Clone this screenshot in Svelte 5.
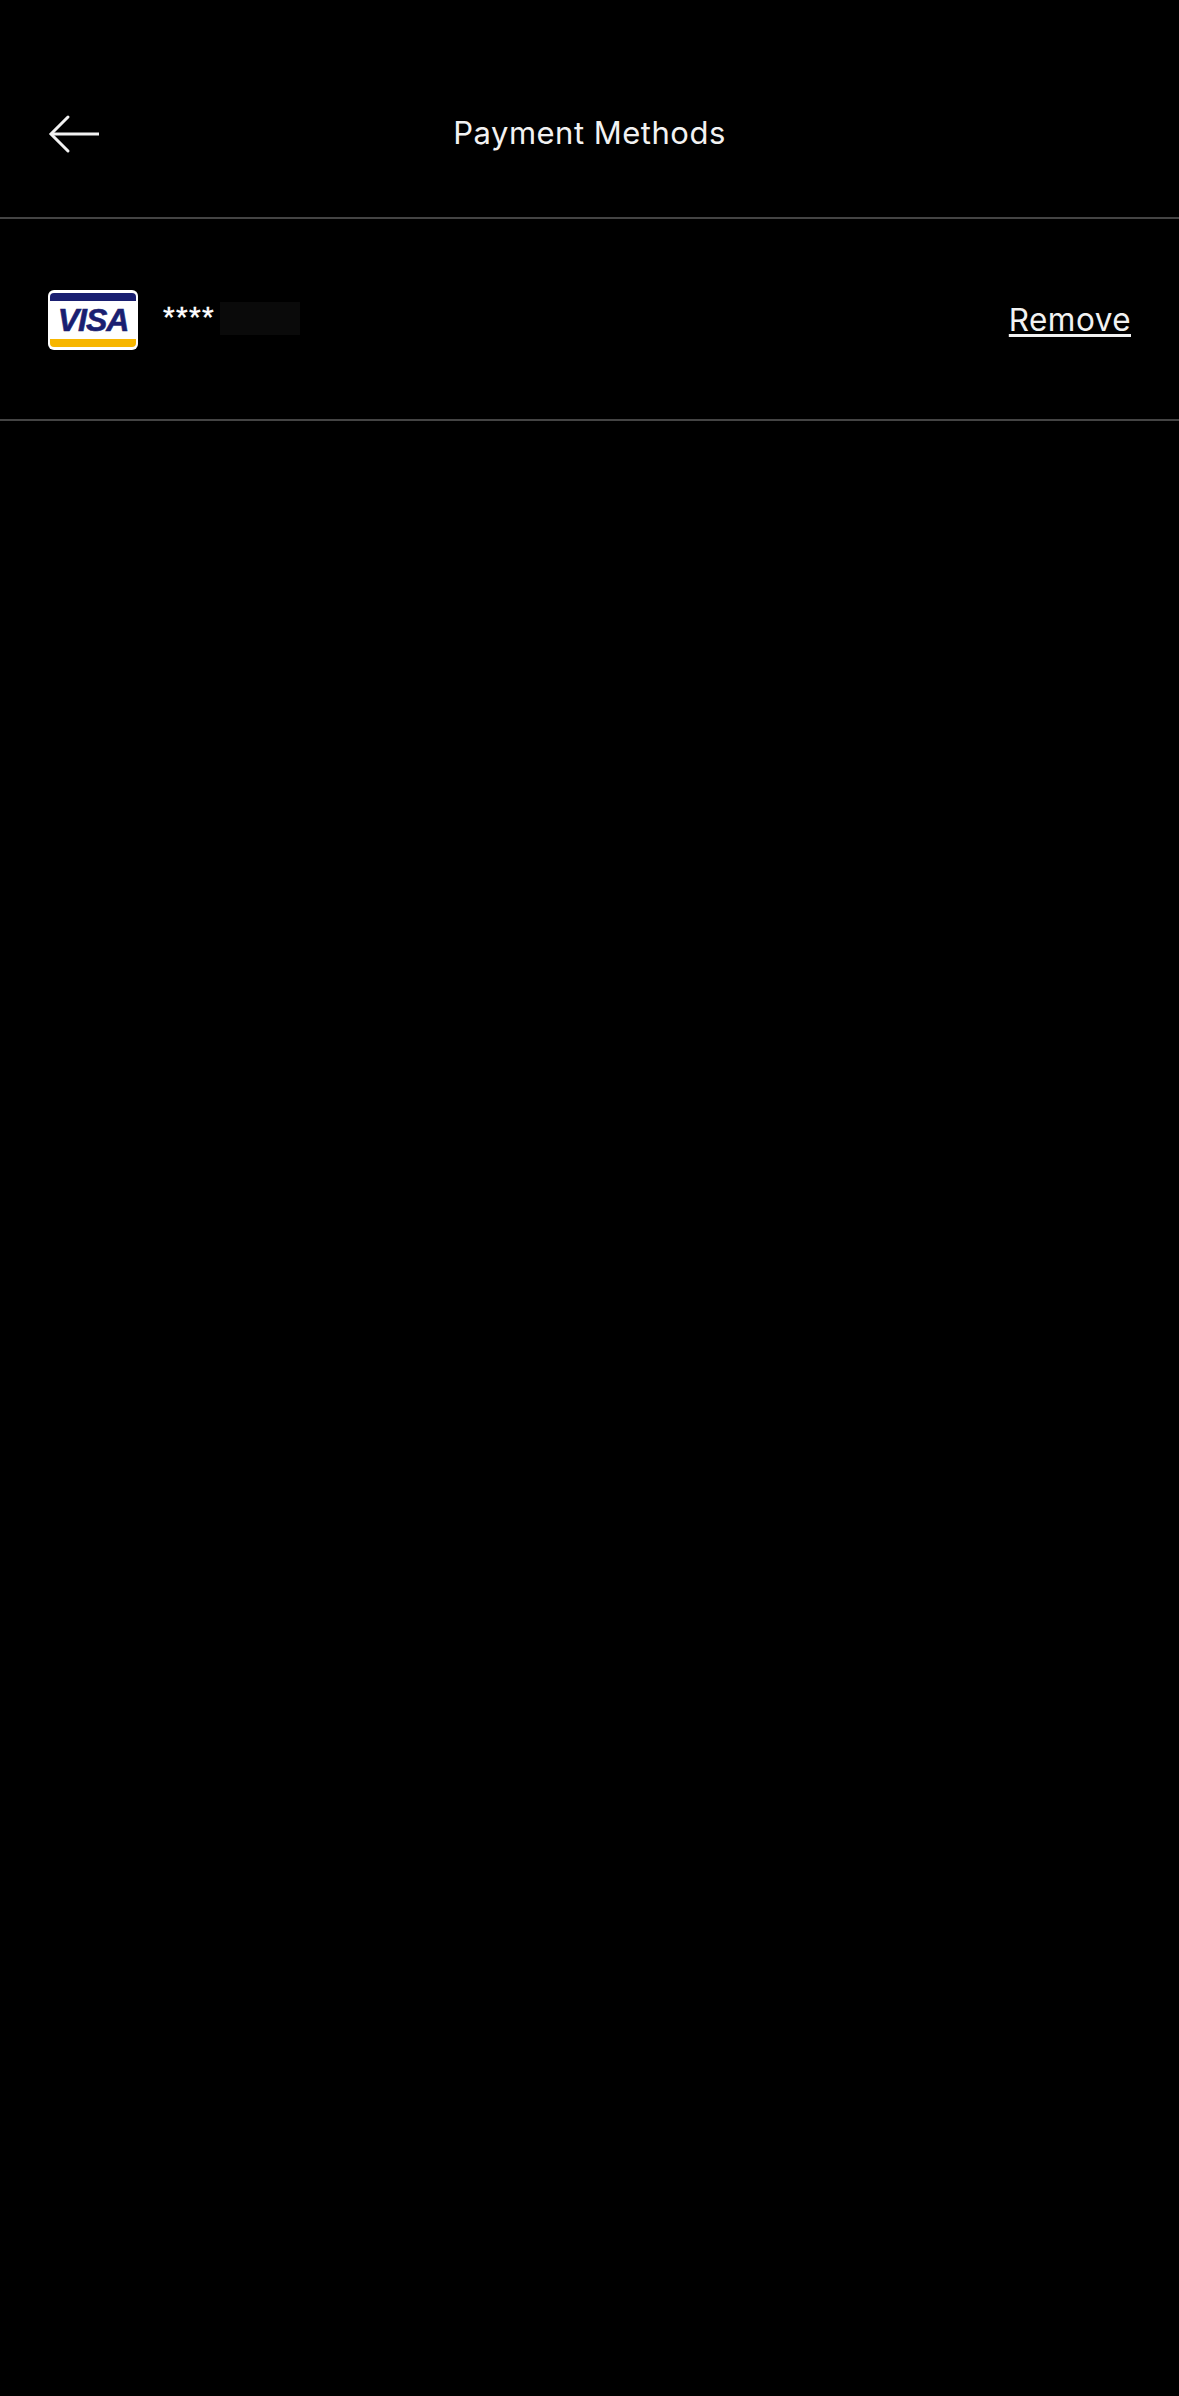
<script lang="ts">
    const last4Hidden = true;
</script>

<div class="screen">
    <header class="topbar">
        <button class="back" aria-label="Back">
            <svg width="52" height="40" viewBox="0 0 52 40" fill="none" stroke="#f2f2f2" stroke-width="3" stroke-linecap="round">
                <path d="M51 20H3" stroke-linecap="butt" />
                <path d="M20 3L3 20L20 37" />
            </svg>
        </button>
        <h1>Payment Methods</h1>
    </header>

    <div class="method">
        <div class="card-info">
            <div class="visa">
                <div class="band navy"></div>
                <div class="logo">VISA</div>
                <div class="band gold"></div>
            </div>
            <span class="stars">****</span>
            {#if last4Hidden}<span class="redacted"></span>{/if}
        </div>
        <span class="remove">Remove</span>
    </div>
</div>

<style>
    :global(body) { margin: 0; background: #000; }
    .screen { height: 2396px; background: #000; color: #f2f2f2; font-family: "Inter", "Liberation Sans", Arial, sans-serif; }
    .topbar { height: 213px; position: relative; display: flex; align-items: center; justify-content: center; border-bottom: 2px solid #444; padding-bottom: 4px; }
    .back { position: absolute; left: 48px; top: 114px; padding: 0; background: none; border: 0; display: block; line-height: 0; }
    h1 { margin: 0; font-size: 31px; font-weight: 400; padding-top: 52px; letter-spacing: 0.5px; }
    .method { height: 200px; display: flex; align-items: center; justify-content: space-between; padding: 0 48px; border-bottom: 2px solid #444; }
    .card-info { display: flex; align-items: center; padding-top: 2px; }
    .visa { width: 90px; height: 60px; box-sizing: border-box; background: #fff; border-radius: 6px; padding: 3px 2px; display: flex; flex-direction: column; justify-content: space-between; }
    .band { height: 8px; }
    .band.navy { background: #1a1f71; border-radius: 4px 4px 0 0; }
    .band.gold { background: #f7b600; border-radius: 0 0 4px 4px; }
    .logo { color: #1a1f71; font-family: "Liberation Sans", Arial, sans-serif; font-size: 32px; line-height: 28px; font-weight: 700; font-style: italic; text-align: center; letter-spacing: -1px; -webkit-text-stroke: 0.6px #1a1f71; }
    .stars { margin-left: 25px; font-family: "Liberation Sans", Arial, sans-serif; font-size: 30px; line-height: 33px; font-weight: 400; width: 57px; color: #fff; margin-top: -8px; letter-spacing: 1.3px; -webkit-text-stroke: 0.4px #fff; }
    .redacted { width: 80px; height: 33px; background: #0a0a0a; margin-top: -4px; }
    .remove { font-size: 31.5px; letter-spacing: 0.45px; text-decoration: underline; text-decoration-thickness: 3px; text-underline-offset: 3px; }
</style>
